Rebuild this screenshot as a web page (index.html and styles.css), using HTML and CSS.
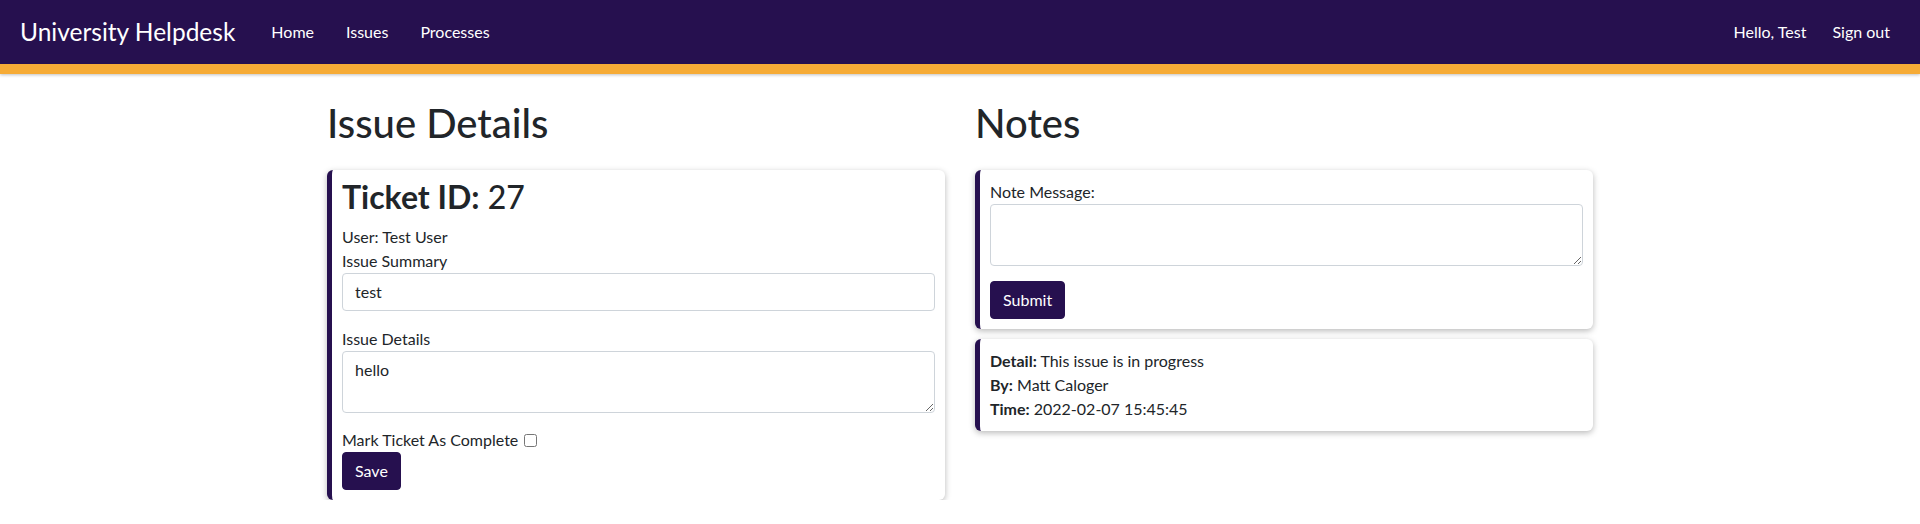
FILE: index.html
```html
<!DOCTYPE html>
<html lang="en">
<head>
<meta charset="utf-8">
<title>University Helpdesk</title>
<link rel="stylesheet" href="styles.css">
</head>
<body>
<nav class="navbar">
  <div class="nav-left">
    <a class="brand" href="#">University Helpdesk</a>
    <ul class="nav-links">
      <li><a href="#">Home</a></li>
      <li><a href="#">Issues</a></li>
      <li><a href="#">Processes</a></li>
    </ul>
  </div>
  <div class="nav-right">
    <span class="greeting">Hello, Test</span>
    <a href="#">Sign out</a>
  </div>
</nav>

<main class="container">
  <section class="column">
    <h1 class="page-title">Issue Details</h1>
    <div class="card card-details">
      <h2 class="ticket-title"><strong>Ticket ID:</strong> 27</h2>
      <div class="line">User: Test User</div>
      <label class="field-label" for="summary">Issue Summary</label>
      <input class="form-control spaced" id="summary" type="text" value="test">
      <label class="field-label" for="details">Issue Details</label>
      <textarea class="form-control spaced-sm" id="details" rows="2">hello</textarea>
      <label class="line check-line">Mark Ticket As Complete <input type="checkbox" class="checkbox"></label>
      <button class="btn" type="button">Save</button>
    </div>
  </section>

  <section class="column">
    <h1 class="page-title">Notes</h1>
    <div class="card">
      <label class="field-label" for="note">Note Message:</label>
      <textarea class="form-control spaced-sm" id="note" rows="2"></textarea>
      <button class="btn" type="button">Submit</button>
    </div>
    <div class="card note-card">
      <div class="line"><strong>Detail:</strong> This issue is in progress</div>
      <div class="line"><strong>By:</strong> Matt Caloger</div>
      <div class="line"><strong>Time:</strong> 2022-02-07 15:45:45</div>
    </div>
  </section>
</main>
</body>
</html>
```

FILE: styles.css
```css
* {
  box-sizing: border-box;
}

body {
  margin: 0;
  font-family: Lato, "Open Sans", "Liberation Sans", sans-serif;
  font-size: 16px;
  line-height: 1.5;
  color: #212529;
  background: #fff;
}

a {
  color: inherit;
  text-decoration: none;
}

/* Navbar */
.navbar {
  height: 74px;
  background: #26104f;
  border-bottom: 10px solid #f6ab36;
  box-shadow: 0 1px 3px rgba(0, 0, 0, 0.25);
  display: flex;
  align-items: center;
  justify-content: space-between;
  padding: 0 30px 0 20px;
  color: #fff;
}

.nav-left {
  display: flex;
  align-items: center;
}

.brand {
  font-size: 24.5px;
  line-height: 1.5;
  margin-right: 20px;
}

.nav-links {
  list-style: none;
  margin: 0;
  padding: 0;
  display: flex;
}

.nav-links a {
  display: block;
  padding: 0 16px;
}

.nav-right {
  display: flex;
  align-items: center;
}

.greeting {
  margin-right: 26px;
}

/* Layout */
.container {
  width: 1266px;
  margin: 0 auto;
  display: grid;
  grid-template-columns: 1fr 1fr;
  column-gap: 30px;
  align-items: start;
}

.page-title {
  font-size: 40px;
  font-weight: 500;
  line-height: 1.2;
  margin: 25px 0 23px;
}

/* Cards */
.card {
  background: #fff;
  border-left: 5px solid #26104f;
  border-radius: 6px;
  padding: 10px;
  box-shadow: 0 2px 6px rgba(0, 0, 0, 0.28);
}

.card-details {
  padding-top: 8px;
}

.note-card {
  margin-top: 10px;
}

.ticket-title {
  font-size: 32px;
  font-weight: 500;
  line-height: 1.2;
  margin: 0 0 9px;
}

.ticket-title strong {
  font-weight: 700;
}

.line,
.field-label {
  display: block;
  line-height: 24px;
}

.form-control {
  display: block;
  width: 100%;
  padding: 6px 12px;
  font-family: inherit;
  font-size: 16px;
  line-height: 24px;
  color: #212529;
  background: #fff;
  border: 1px solid #ced4da;
  border-radius: 4px;
  margin: 0;
}

textarea.form-control {
  height: 62px;
  resize: vertical;
}

.spaced {
  margin-bottom: 16px;
}

.spaced-sm {
  margin-bottom: 15px;
}

.checkbox {
  width: 13px;
  height: 13px;
  margin: 0 0 0 2px;
  vertical-align: -1px;
}

.btn {
  display: inline-block;
  font-family: inherit;
  font-size: 16px;
  line-height: 24px;
  padding: 6px 12px;
  color: #fff;
  background: #26104f;
  border: 1px solid #26104f;
  border-radius: 4px;
  cursor: pointer;
}
```
